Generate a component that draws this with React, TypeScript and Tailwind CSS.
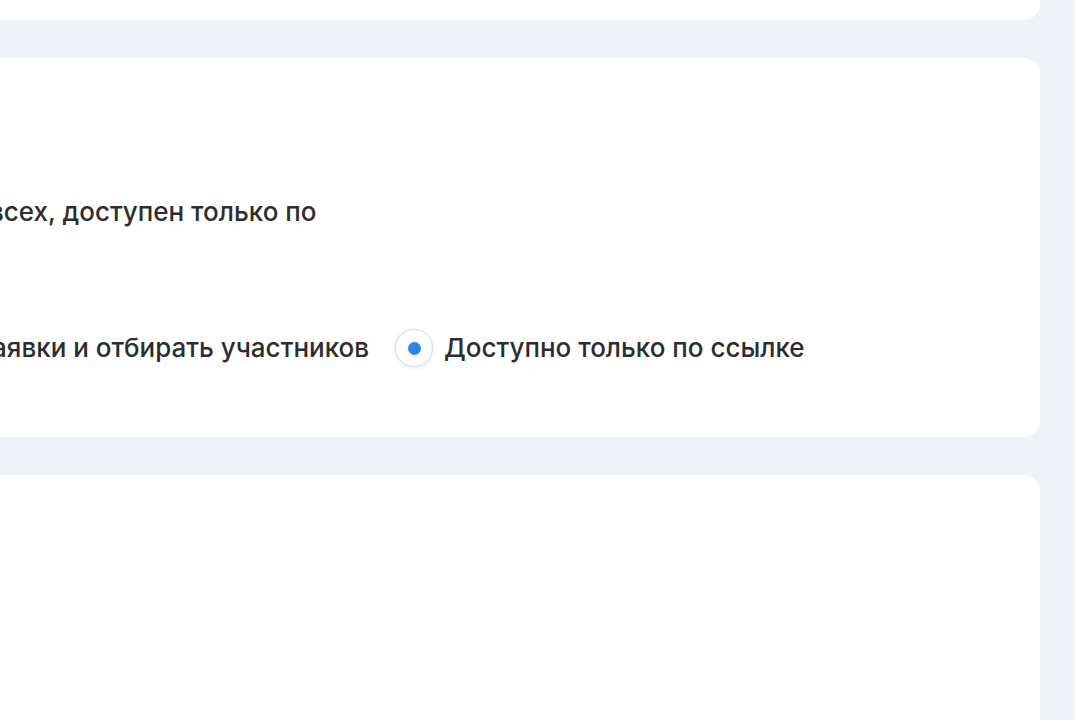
export default function App() {
  return (
    <div
      className="h-[720px] overflow-hidden bg-[#eff3f8] text-[#2c2d2e]"
      style={{ fontFamily: 'Inter, "Noto Sans", sans-serif' }}
    >
      <div className="-ml-[24px] -mt-[80px] mr-[35px] flex flex-col gap-[38px]">
        <div className="h-[100px] rounded-2xl bg-white" />

        <div className="h-[379px] rounded-2xl bg-white pt-[140px]">
          <p className="ml-[13px] h-[28px] text-[26px] font-medium leading-[28px] whitespace-nowrap">
            всех, доступен только по
          </p>

          <div className="mt-[104px] flex h-[36px] items-center text-[26px] font-medium leading-[28px] whitespace-nowrap">
            <span className="ml-[3px]">заявки и отбирать участников</span>
            <label className="ml-[26px] flex items-center gap-[11px]">
              <span className="flex h-[38px] w-[38px] items-center justify-center rounded-full border border-[#d7dce2] bg-white shadow-[0_1px_4px_rgba(0,0,0,0.1)]">
                <span className="h-[13px] w-[13px] rounded-full bg-[#2688eb]" />
              </span>
              <span>Доступно только по ссылке</span>
            </label>
          </div>
        </div>

        <div className="h-[400px] rounded-2xl bg-white" />
      </div>
    </div>
  );
}
